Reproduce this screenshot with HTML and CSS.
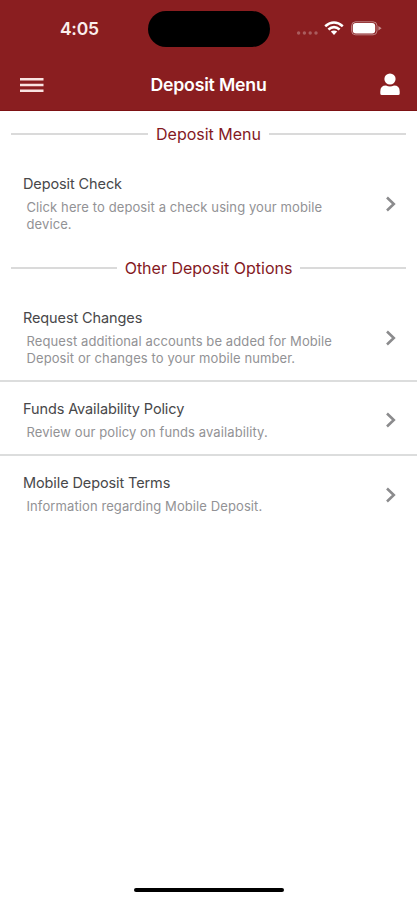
FILE: index.html
```html
<!DOCTYPE html>
<html lang="en">
<head>
<meta charset="utf-8">
<title>Deposit Menu</title>
<link rel="stylesheet" href="styles.css">
</head>
<body>
<div class="screen">
  <header class="header">
    <div class="status">
      <span class="time">4:05</span>
      <span class="island"></span>
      <svg class="signals" width="86" height="16" viewBox="0 0 86 16" fill="#fff">
        <g opacity=".28"><circle cx="2.6" cy="13" r="1.7"/><circle cx="8.4" cy="13" r="1.7"/><circle cx="14.2" cy="13" r="1.7"/><circle cx="20" cy="13" r="1.7"/></g>
        <g fill="none" stroke="#fff" stroke-width="2.6"><path d="M29.200 6.200Q38 -1.200 46.800 6.200"/><path d="M32.400 9.600Q38 4.800 43.600 9.600"/></g>
        <path d="M34.800 11.600Q38 9.300 41.200 11.600L38 15Z"/>
        <rect x="55.600" y="1.800" width="25.400" height="13" rx="4" fill="none" stroke="#fff" opacity=".45"/>
        <rect x="56.800" y="3" width="22.400" height="10.600" rx="3"/>
        <path d="M82.400 6L85.600 8.300L82.400 10.600Z" opacity=".5"/>
      </svg>
    </div>
    <div class="navbar">
      <svg class="menu" width="24" height="16" viewBox="0 0 24 16" fill="#f9e3e1"><path d="M0 1h23.500v2.500H0zM0 6.800h23.500v2.500H0zM0 12.600h23.500v2.500H0z"/></svg>
      <h1 class="title">Deposit Menu</h1>
      <svg class="user" width="20" height="23" viewBox="0 0 20 23" fill="#fff"><circle cx="10" cy="6" r="5.600"/><path d="M.3 18.400Q.3 12.500 6 12.500Q10 14.600 14 12.500Q19.700 12.500 19.700 18.400V20.500Q19.700 22 18.200 22H1.800Q.3 22 .3 20.500Z"/></svg>
    </div>
  </header>
  <main>
    <h2 class="section"><span>Deposit Menu</span></h2>
    <div class="row">
      <div class="copy"><div class="name">Deposit Check</div><p class="desc">Click here to deposit a check using your mobile<br>device.</p></div>
      <svg class="chevron" width="12" height="16" viewBox="0 0 12 16"><path d="M2 1.500L8.800 8L2 14.500"/></svg>
    </div>
    <h2 class="section"><span>Other Deposit Options</span></h2>
    <div class="row line">
      <div class="copy"><div class="name">Request Changes</div><p class="desc">Request additional accounts be added for Mobile<br>Deposit or changes to your mobile number.</p></div>
      <svg class="chevron" width="12" height="16" viewBox="0 0 12 16"><path d="M2 1.500L8.800 8L2 14.500"/></svg>
    </div>
    <div class="row line">
      <div class="copy"><div class="name">Funds Availability Policy</div><p class="desc">Review our policy on funds availability.</p></div>
      <svg class="chevron" width="12" height="16" viewBox="0 0 12 16"><path d="M2 1.500L8.800 8L2 14.500"/></svg>
    </div>
    <div class="row">
      <div class="copy"><div class="name">Mobile Deposit Terms</div><p class="desc">Information regarding Mobile Deposit.</p></div>
      <svg class="chevron" width="12" height="16" viewBox="0 0 12 16"><path d="M2 1.500L8.800 8L2 14.500"/></svg>
    </div>
  </main>
  <div class="home"></div>
</div>
</body>
</html>
```
FILE: styles.css
```css
* { box-sizing: border-box; }
body { margin: 0; background: #fff; font-family: Inter, "Liberation Sans", sans-serif; }
.screen { height: 900px; display: flex; flex-direction: column; overflow: hidden; }
main { flex: 1; padding-top: .5px; }
.header { height: 111px; background: #8a1e20; border-bottom: 1px solid #7d1214; color: #fff; }
.status { height: 58px; display: grid; grid-template-columns: 148px 122px 1fr; align-items: center; }
.time { padding-left: 60px; margin-top: -1px; font-size: 17.500px; font-weight: 600; letter-spacing: -.3px; color: #fbeeed; }
.island { height: 36px; border-radius: 18px; background: #000; }
.signals { margin-left: 26px; margin-top: -2px; }
.navbar { height: 53px; display: grid; grid-template-columns: 44px 1fr 44px; align-items: center; }
.menu { margin-left: 20px; }
.title { margin: 0; text-align: center; font-size: 17.700px; line-height: 22px; font-weight: 600; letter-spacing: -.2px; }
.user { margin-left: 7px; }
.section { height: 45px; margin: 0; padding: 0 11px; display: flex; align-items: center; gap: 8px; font-size: 16px; font-weight: 400; line-height: 20px; color: #84191f; }
.section::before, .section::after { content: ""; flex: 1; height: 2px; background: #dadada; }
.row { display: flex; align-items: center; padding: 16.500px 20.500px 12px 23px; }
.line { border-bottom: 2px solid #dcdddd; }
.line + .row, .row.line + .line { padding-bottom: 12.500px; }
.copy { flex: 1; }
.name { font-size: 14.500px; line-height: 22px; letter-spacing: -.11px; color: #48484a; }
.desc { margin: 4px 0 0 3.500px; font-size: 13px; line-height: 17.300px; letter-spacing: .1px; color: #929295; white-space: nowrap; }
.chevron { flex: none; margin-top: 1px; fill: none; stroke: #8b8b8d; stroke-width: 2.600; }
.home { flex: none; width: 150px; height: 4px; margin: 0 auto 8px; border-radius: 2px; background: #000; }
```
